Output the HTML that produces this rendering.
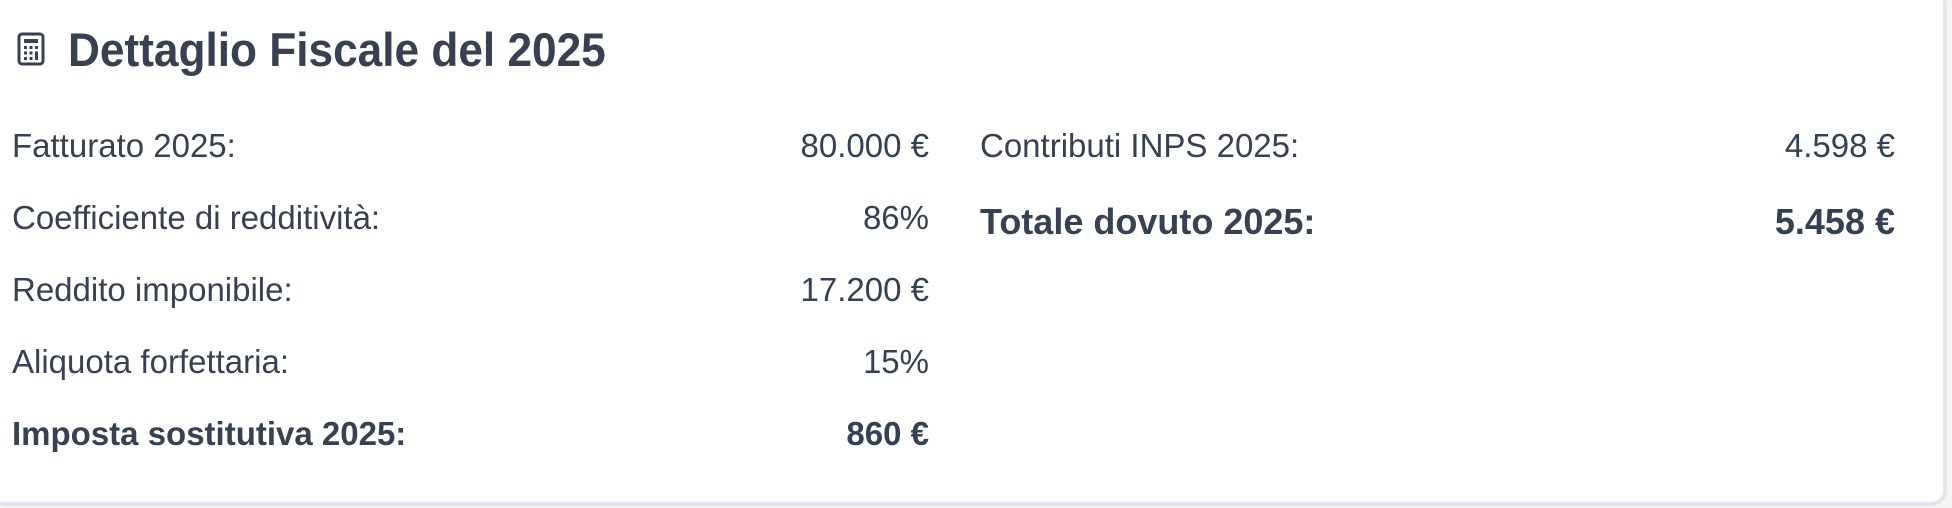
<!DOCTYPE html>
<html><head><meta charset="utf-8"><style>
html,body{margin:0;padding:0;}
body{width:1952px;height:508px;background:#f3f4f6;position:relative;overflow:hidden;font-family:"Liberation Sans",sans-serif;color:#374151;}
.card{position:absolute;left:0;top:0;width:1943px;height:502px;background:#fff;border-radius:0 0 14px 0;box-shadow:1px 1px 2px rgba(0,0,0,.12);border-right:2px solid #e5e7eb;border-bottom:2px solid #e5e7eb;}
.title{position:absolute;left:68px;top:22px;font-size:47px;font-weight:bold;white-space:nowrap;transform:scaleX(0.94);transform-origin:left center;line-height:56px;color:#374151;}
.icon{position:absolute;left:17px;top:32px;}
.row{position:absolute;height:40px;line-height:40px;font-size:33px;white-space:nowrap;}
.l{left:12px;width:917px;}
.r{left:980px;width:915px;}
.row span.v{position:absolute;right:0;top:0;color:#334155;}
.b{font-weight:bold;}
.big{font-size:36px;font-weight:bold;}
</style></head><body>
<div class="card">
<svg class="icon" width="28" height="34" viewBox="0 0 28 34"><rect x="2" y="2" width="24" height="30" rx="3" fill="none" stroke="#374151" stroke-width="3"/><rect x="7" y="7" width="14" height="4" fill="#374151"/><g fill="#374151"><rect x="7" y="14" width="3" height="3"/><rect x="12.5" y="14" width="3" height="3"/><rect x="18" y="14" width="3" height="3"/><rect x="7" y="19.5" width="3" height="3"/><rect x="12.5" y="19.5" width="3" height="3"/><rect x="7" y="25" width="3" height="3"/><rect x="12.5" y="25" width="3" height="3"/><rect x="18" y="19.5" width="3" height="8.5"/></g></svg>
<div class="title">Dettaglio Fiscale del 2025</div>

<div class="row l" style="top:126px">Fatturato 2025:<span class="v">80.000 €</span></div>
<div class="row l" style="top:198px">Coefficiente di redditività:<span class="v">86%</span></div>
<div class="row l" style="top:270px">Reddito imponibile:<span class="v">17.200 €</span></div>
<div class="row l" style="top:342px">Aliquota forfettaria:<span class="v">15%</span></div>
<div class="row l b" style="top:414px">Imposta sostitutiva 2025:<span class="v" style="font-weight:bold">860 €</span></div>

<div class="row r" style="top:126px">Contributi INPS 2025:<span class="v">4.598 €</span></div>
<div class="row r big" style="top:202px">Totale dovuto 2025:<span class="v" style="font-weight:bold">5.458 €</span></div>
</div>
</body></html>
